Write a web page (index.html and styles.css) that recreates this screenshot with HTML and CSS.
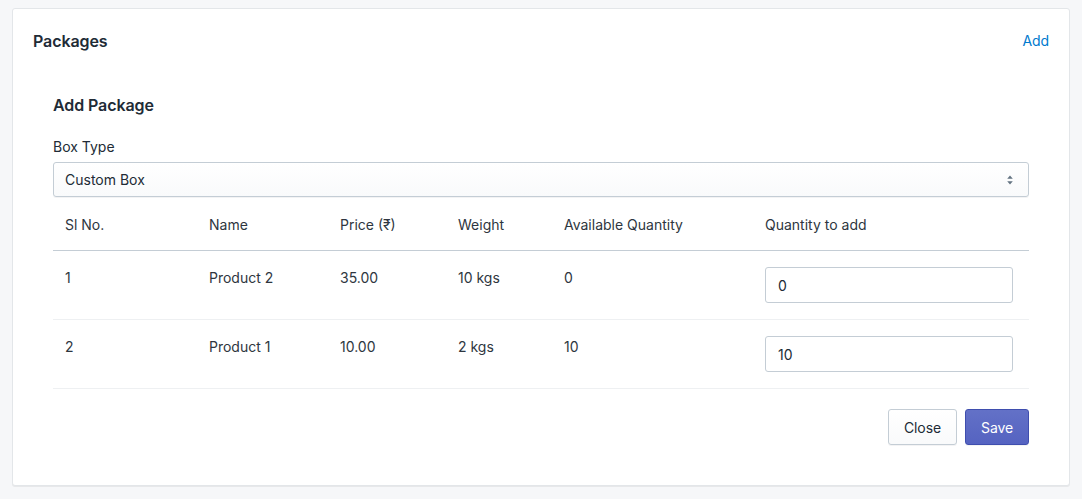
FILE: index.html
```html
<!DOCTYPE html>
<html>
<head>
<meta charset="utf-8">
<link rel="stylesheet" href="styles.css">
</head>
<body>
<div class="card">
  <div class="card-header">
    <h2 class="card-title">Packages</h2>
    <a class="link" href="#">Add</a>
  </div>
  <div class="panel">
    <h3 class="panel-title">Add Package</h3>
    <label class="label">Box Type</label>
    <div class="select">
      <span class="select-value">Custom Box</span>
      <svg class="select-arrow" width="8" height="12" viewBox="0 0 8 12"><path d="M4 1.5 L6.8 4.8 H1.2 Z M4 10.5 L1.2 7.2 H6.8 Z" fill="#637381"/></svg>
    </div>
    <table class="table">
      <colgroup>
        <col class="c1"><col class="c2"><col class="c3"><col class="c4"><col class="c5"><col class="c6">
      </colgroup>
      <thead>
        <tr><th>Sl No.</th><th>Name</th><th>Price (₹)</th><th>Weight</th><th>Available Quantity</th><th>Quantity to add</th></tr>
      </thead>
      <tbody>
        <tr><td>1</td><td>Product 2</td><td>35.00</td><td>10 kgs</td><td>0</td><td class="input-cell"><input class="input" type="text" value="0"></td></tr>
        <tr><td>2</td><td>Product 1</td><td>10.00</td><td>2 kgs</td><td>10</td><td class="input-cell"><input class="input" type="text" value="10"></td></tr>
      </tbody>
    </table>
    <div class="actions">
      <button class="btn">Close</button>
      <button class="btn btn-primary">Save</button>
    </div>
  </div>
</div>
</body>
</html>
```
FILE: styles.css
```css
* { box-sizing: border-box; }
html, body { margin: 0; }
body {
  background: #f6f7f9;
  padding: 8px 12px;
  font-family: Inter, "Liberation Sans", sans-serif;
  font-size: 14px;
  line-height: 20px;
  color: #212b36;
}
.card {
  background: #fff;
  border: 1px solid #e3e6e9;
  border-radius: 3px;
  box-shadow: 0 1px 0 rgba(63,63,68,0.08);
  padding: 20px;
}
.card-header {
  display: flex;
  justify-content: space-between;
  align-items: center;
}
.card-title {
  margin: 0;
  font-size: 16px;
  line-height: 24px;
  font-weight: 600;
  letter-spacing: -0.1px;
}
.link {
  color: #007ace;
  text-decoration: none;
  font-size: 14px;
  letter-spacing: -0.1px;
}
.panel {
  margin-top: 20px;
  border-radius: 3px;
  background: #fff;
  padding: 20px;
}
.panel-title {
  margin: 0 0 20px;
  font-size: 16px;
  line-height: 24px;
  font-weight: 600;
  letter-spacing: -0.1px;
}
.label {
  display: block;
  margin-bottom: 5px;
  color: #212b36;
}
.select {
  height: 35px;
  border: 1px solid #c4cdd5;
  border-radius: 3px;
  box-shadow: 0 1px 0 rgba(22,29,37,0.05);
  background: linear-gradient(#fff, #f9fafb);
  display: flex;
  align-items: center;
  justify-content: space-between;
  padding: 0 14px 0 11px;
}
.select-arrow { display: block; }
.table {
  width: 100%;
  border-collapse: collapse;
  table-layout: fixed;
  color: #2e3640;
  margin-top: 1px;
}
.c1 { width: 144px; }
.c2 { width: 131px; }
.c3 { width: 118px; }
.c4 { width: 106px; }
.c5 { width: 201px; }
.c6 { width: 276px; }
.table th {
  text-align: left;
  font-weight: 400;
  padding: 17px 12px 15px;
  border-bottom: 1px solid #c4cdd5;
}
.table td {
  vertical-align: top;
  padding: 17px 12px 15px;
  border-bottom: 1px solid #eef0f2;
}
.table td.input-cell { padding: 16px 16px 16px 12px; }
.input {
  display: block;
  width: 100%;
  height: 36px;
  border: 1px solid #c4cdd5;
  border-radius: 3px;
  padding: 0 12px;
  font-family: inherit;
  font-size: 14px;
  color: #212b36;
  background: #fff;
}
.actions {
  display: flex;
  justify-content: flex-end;
  gap: 8px;
  margin-top: 20px;
}
.btn {
  height: 36px;
  padding: 0 15px;
  font-family: inherit;
  font-size: 14px;
  letter-spacing: -0.1px;
  border-radius: 3px;
  border: 1px solid #c4cdd5;
  background: linear-gradient(#fff, #f9fafb);
  color: #212b36;
  box-shadow: 0 1px 0 rgba(22,29,37,0.05);
}
.btn-primary {
  background: linear-gradient(#6371c7, #5563c1);
  border-color: #3f4eae;
  color: #fff;
}
```
